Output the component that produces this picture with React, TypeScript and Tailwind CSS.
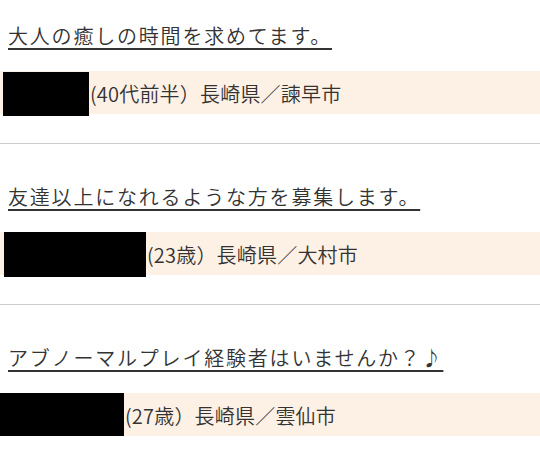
import React from 'react';

const posts = [
  {
    title: '大人の癒しの時間を求めてます。',
    meta: '(40代前半）長崎県／諫早市',
    box: 'ml-[3px] w-[86px] h-[44px] mt-[1px]',
  },
  {
    title: '友達以上になれるような方を募集します。',
    meta: '(23歳）長崎県／大村市',
    box: 'ml-[4px] w-[142px] h-[45px]',
  },
  {
    title: 'アブノーマルプレイ経験者はいませんか？♪',
    meta: '(27歳）長崎県／雲仙市',
    box: 'ml-0 w-[124px] h-[43px]',
  },
];

export default function App() {
  return (
    <div className="w-[540px] h-[460px] overflow-hidden bg-white text-[#333] font-['Noto_Sans_CJK_JP',sans-serif]">
      {posts.map((p, i) => (
        <section
          key={i}
          className={i === 0 ? 'pt-[22px] pb-[29px] border-b border-[#cccccc]' : 'pt-[39px] pb-[29px] border-b border-[#cccccc]'}
        >
          <a href="#" className="block px-2 text-[20px] font-[350] leading-[28px] tracking-[1.8px] underline underline-offset-[4px] decoration-[1.5px] whitespace-nowrap">
            {p.title}
          </a>
          <div className="mt-[21px] h-[43px] bg-[#fdf1e6] flex items-start">
            <div className={'bg-black shrink-0 ' + p.box} />
            <span className="self-center text-[20px] font-[350] leading-[43px] pt-[2px] pl-[1px] tracking-[0.2px] whitespace-nowrap">{p.meta}</span>
          </div>
        </section>
      ))}
    </div>
  );
}
